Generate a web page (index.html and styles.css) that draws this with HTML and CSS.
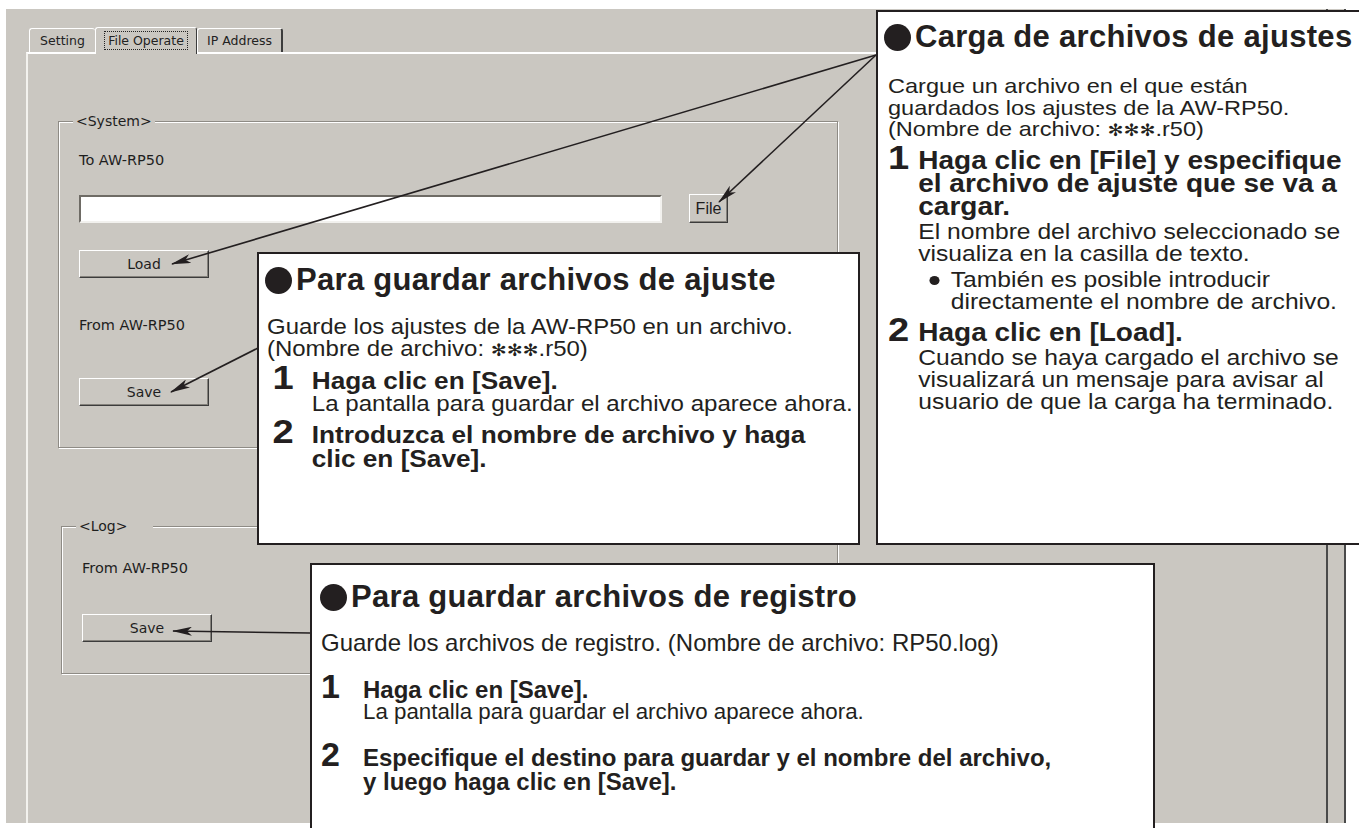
FILE: index.html
```html
<!DOCTYPE html>
<html>
<head>
    <meta charset="UTF-8">
    <title>File Operate</title>
    <link rel="stylesheet" href="styles.css">
</head>
<body>
    <div class="shot">
        <div class="screen">
            <div class="window">
                <div class="tabs">
                    <div class="tab tab-setting">Setting</div>
                    <div class="tab active"><span class="focus">File Operate</span></div>
                    <div class="tab last">IP Address</div>
                </div>
                <div class="page">
                    <div class="group system">
                        <span class="group-label">&lt;System&gt;</span>
                        <div class="ui-text to-label">To AW-RP50</div>
                        <div class="file-row">
                            <div class="field"></div>
                            <div class="btn btn-file">File</div>
                        </div>
                        <div class="btn btn-wide load">Load</div>
                        <div class="ui-text from-label">From AW-RP50</div>
                        <div class="btn btn-wide save">Save</div>
                    </div>
                    <div class="group log">
                        <span class="group-label">&lt;Log&gt;</span>
                        <div class="ui-text from-label">From AW-RP50</div>
                        <div class="btn btn-wide save">Save</div>
                    </div>
                </div>
            </div>
            <div class="scrollbar"></div>
        </div>

        <!-- pointer lines from the notes to the controls -->
        <svg class="arrows" width="1359" height="828" viewBox="0 0 1359 828">
            <defs>
                <marker id="head" markerUnits="userSpaceOnUse" markerWidth="20" markerHeight="9" refX="19" refY="4.5" orient="auto">
                    <path d="M0,0 L20,4.5 L0,9 L5,4.5 Z" fill="#231f20"/>
                </marker>
            </defs>
            <g stroke="#231f20" stroke-width="1.6" fill="none">
                <line x1="876" y1="55" x2="719" y2="202" marker-end="url(#head)"/>
                <line x1="876" y1="55" x2="172" y2="264" marker-end="url(#head)"/>
                <line x1="258" y1="348" x2="171" y2="392" marker-end="url(#head)"/>
                <line x1="310" y1="633" x2="173" y2="631" marker-end="url(#head)"/>
            </g>
        </svg>

        <section class="callout callout-load">
            <h2 class="callout-title"><span class="dot"></span>Carga de archivos de ajustes</h2>
            <div class="callout-body">
                <p class="lead">Cargue un archivo en el que están<br>guardados los ajustes de la AW-RP50.<br>(Nombre de archivo: <span class="stars">✻✻✻</span>.r50)</p>
                <div class="step step-first">
                    <span class="num">1</span>
                    <div>
                        <p class="step-title">Haga clic en [File] y especifique<br>el archivo de ajuste que se va a<br>cargar.</p>
                        <p class="step-text">El nombre del archivo seleccionado se<br>visualiza en la casilla de texto.</p>
                        <div class="note">
                            <span class="note-mark"><span class="note-dot"></span></span>
                            <span>También es posible introducir<br>directamente el nombre de archivo.</span>
                        </div>
                    </div>
                </div>
                <div class="step step-next">
                    <span class="num">2</span>
                    <div>
                        <p class="step-title">Haga clic en [Load].</p>
                        <p class="step-text">Cuando se haya cargado el archivo se<br>visualizará un mensaje para avisar al<br>usuario de que la carga ha terminado.</p>
                    </div>
                </div>
            </div>
        </section>

        <section class="callout callout-save">
            <h2 class="callout-title"><span class="dot"></span>Para guardar archivos de ajuste</h2>
            <div class="callout-body">
                <p class="lead">Guarde los ajustes de la AW-RP50 en un archivo.<br>(Nombre de archivo: <span class="stars">✻✻✻</span>.r50)</p>
                <div class="step step-first">
                    <span class="num">1</span>
                    <div>
                        <p class="step-title">Haga clic en [Save].</p>
                        <p class="step-text">La pantalla para guardar el archivo aparece ahora.</p>
                    </div>
                </div>
                <div class="step step-next">
                    <span class="num">2</span>
                    <div>
                        <p class="step-title">Introduzca el nombre de archivo y haga<br>clic en [Save].</p>
                    </div>
                </div>
            </div>
        </section>

        <section class="callout callout-log">
            <h2 class="callout-title"><span class="dot"></span>Para guardar archivos de registro</h2>
            <div class="callout-body">
                <p class="lead">Guarde los archivos de registro. (Nombre de archivo: RP50.log)</p>
                <div class="step step-first">
                    <span class="num">1</span>
                    <div>
                        <p class="step-title">Haga clic en [Save].</p>
                        <p class="step-text">La pantalla para guardar el archivo aparece ahora.</p>
                    </div>
                </div>
                <div class="step step-next">
                    <span class="num">2</span>
                    <div>
                        <p class="step-title">Especifique el destino para guardar y el nombre del archivo,<br>y luego haga clic en [Save].</p>
                    </div>
                </div>
            </div>
        </section>
    </div>
</body>
</html>
```

FILE: styles.css
```css
/* screenshot of the dialog with the manual's notes on top */
body {
    margin: 0;
    background: #fff;
    font-family: "DejaVu Sans", sans-serif;
}
.shot {
    position: relative;
    width: 1359px;
    height: 828px;
    overflow: hidden;
    box-sizing: border-box;
    padding: 9px 0 0 6px;
    background: #fff;
}
.screen {
    display: flex;
    width: 1340px;
    height: 814px;
    background: #cac7c1;
}
.window {
    flex: 1;
    display: flex;
    flex-direction: column;
    padding: 16px 0 0 20px;
}

/* tabs */
.tabs {
    display: flex;
    align-items: flex-end;
    height: 27px;
    margin-left: 3px;
    position: relative;
    z-index: 1;
}
.tab {
    height: 24px;
    box-sizing: border-box;
    display: flex;
    align-items: center;
    justify-content: center;
    white-space: nowrap;
    font-size: 12.5px;
    color: #222;
    border-top: 1px solid #fff;
    border-left: 1px solid #fff;
    border-radius: 3px 3px 0 0;
}
.tab-setting {
    width: 66px;
}
.tab.active {
    height: 27px;
    width: 102px;
    margin-bottom: -2px;
    padding-bottom: 2px;
    background: #cac7c1;
    border-right: 1px solid #3c3c3c;
}
.focus {
    border: 1px dotted #222;
    padding: 1px 3px;
}
.tab.last {
    width: 86px;
    border-right: 2px solid #3c3c3c;
}

/* tab page */
.page {
    flex: 1;
    border-top: 2px solid #fff;
    border-left: 2px solid #f3f2ee;
    padding: 67px 0 0 30px;
}
.group {
    position: relative;
    box-sizing: border-box;
    display: flex;
    flex-direction: column;
    align-items: flex-start;
    padding-left: 20px;
    border: 1px solid #8e8b85;
    box-shadow: inset 1px 1px 0 #fff, 1px 1px 0 #fff;
}
.system {
    width: 780px;
    height: 327px;
}
.log {
    width: 777px;
    height: 148px;
    margin: 78px 0 0 3px;
}
.group-label {
    position: absolute;
    top: -9px;
    left: 14px;
    padding: 0 3px;
    background: #cac7c1;
    font-size: 14px;
    line-height: 16px;
    color: #1e1e1e;
}
.log .group-label {
    padding-right: 26px;
}
.ui-text {
    font-size: 14.5px;
    line-height: 16px;
    color: #1e1e1e;
}
.to-label {
    margin-top: 30px;
}
.file-row {
    display: flex;
    align-items: center;
    margin-top: 26px;
}
.field {
    width: 583px;
    height: 28px;
    box-sizing: border-box;
    background: #fff;
    border: 2px solid;
    border-color: #6e6b65 #f2f1ee #f2f1ee #6e6b65;
}
.btn {
    box-sizing: border-box;
    display: flex;
    align-items: center;
    justify-content: center;
    background: #cac7c1;
    border: 1px solid;
    border-color: #fff #3c3c3c #3c3c3c #fff;
    box-shadow: inset -1px -1px 0 #85827c;
    font-size: 14px;
    color: #1e1e1e;
}
.btn-file {
    margin-left: 27px;
    width: 39px;
    height: 29px;
    font-family: "Liberation Sans", Arial, sans-serif;
    font-size: 16px;
}
.btn-wide {
    width: 130px;
    height: 28px;
}
.load {
    margin-top: 27px;
}
.system .from-label {
    margin-top: 39px;
}
.system .save {
    margin-top: 45px;
}
.log .from-label {
    margin-top: 33px;
}
.log .save {
    margin-top: 38px;
}
.scrollbar {
    width: 20px;
    box-sizing: border-box;
    border-left: 2px solid #4a4a4a;
    border-right: 2px solid #4a4a4a;
}

/* arrows */
.arrows {
    position: absolute;
    left: 0;
    top: 0;
    z-index: 1;
}

/* notes */
.callout {
    position: absolute;
    z-index: 2;
    box-sizing: border-box;
    background: #fff;
    border: 2px solid #231f20;
    color: #231f20;
    font-family: "Liberation Sans", Arial, sans-serif;
    white-space: nowrap;
}
.callout-load {
    left: 876px;
    top: 10px;
    width: 500px;
    height: 535px;
    padding: 8px 0 0 6px;
}
.callout-save {
    left: 257px;
    top: 252px;
    width: 603px;
    height: 293px;
    padding: 9px 0 0 6px;
}
.callout-log {
    left: 310px;
    top: 563px;
    width: 845px;
    height: 300px;
    padding: 15px 0 0 8px;
}
.callout-title {
    margin: 0;
    display: flex;
    align-items: center;
    font-size: 31px;
    line-height: 34px;
    font-weight: bold;
    letter-spacing: 0.3px;
}
.dot {
    flex: none;
    width: 27px;
    height: 27px;
    margin-right: 4px;
    border-radius: 50%;
    background: #231f20;
}
.callout-load .callout-body,
.callout-save .callout-body {
    transform: scaleX(1.12);
    transform-origin: 0 0;
}
.callout-load .callout-body {
    margin-left: 4px;
}
.callout-save .callout-body {
    margin-left: 2px;
}
.callout-log .callout-body {
    margin-left: 1px;
}
p {
    margin: 0;
}
.lead {
    font-size: 22px;
    line-height: 22px;
}
.stars {
    font-family: "DejaVu Sans", sans-serif;
    font-size: 17px;
}
.step {
    display: flex;
    align-items: baseline;
}
.num {
    flex: none;
    box-sizing: border-box;
    font-size: 34px;
    line-height: 16px;
    font-weight: bold;
}
.step-title {
    font-size: 24.5px;
    line-height: 23px;
    font-weight: bold;
}
.step-text {
    font-size: 22px;
    line-height: 22px;
}
.note {
    display: flex;
    margin-top: 4px;
    font-size: 22px;
    line-height: 22px;
}
.note-mark {
    flex: none;
    width: 29px;
    padding-left: 10px;
    box-sizing: border-box;
}
.note-dot {
    display: inline-block;
    width: 9px;
    height: 9px;
    border-radius: 50%;
    background: #231f20;
    vertical-align: 2px;
}

/* spacing of each note */
.callout-load .lead {
    margin-top: 21px;
    font-size: 21px;
    line-height: 21.5px;
}
.callout-load .num {
    width: 27px;
}
.callout-load .step-title {
    font-size: 25px;
}
.callout-load .step-first {
    margin-top: 7px;
}
.callout-load .step-text {
    margin-top: 3px;
}
.callout-load .step-next {
    margin-top: 8.5px;
}
.callout-save .lead {
    margin-top: 19px;
    font-size: 21.4px;
}
.callout-save .num {
    width: 40px;
    padding-left: 5px;
}
.callout-save .step-title {
    font-size: 23.4px;
}
.callout-save .step-text {
    font-size: 21.5px;
}
.callout-save .step-first {
    margin-top: 7.5px;
}
.callout-save .step-next {
    margin-top: 8px;
}
.callout-save .step-next .step-title,
.callout-log .step-next .step-title {
    line-height: 24px;
}
.callout-log .lead {
    margin-top: 18px;
    font-size: 24px;
}
.callout-log .num {
    width: 42px;
}
.callout-log .step-title {
    font-size: 24px;
}
.callout-log .step-text {
    font-size: 22.3px;
}
.callout-log .step-first {
    margin-top: 23.5px;
}
.callout-log .step-next {
    margin-top: 23px;
}
```
